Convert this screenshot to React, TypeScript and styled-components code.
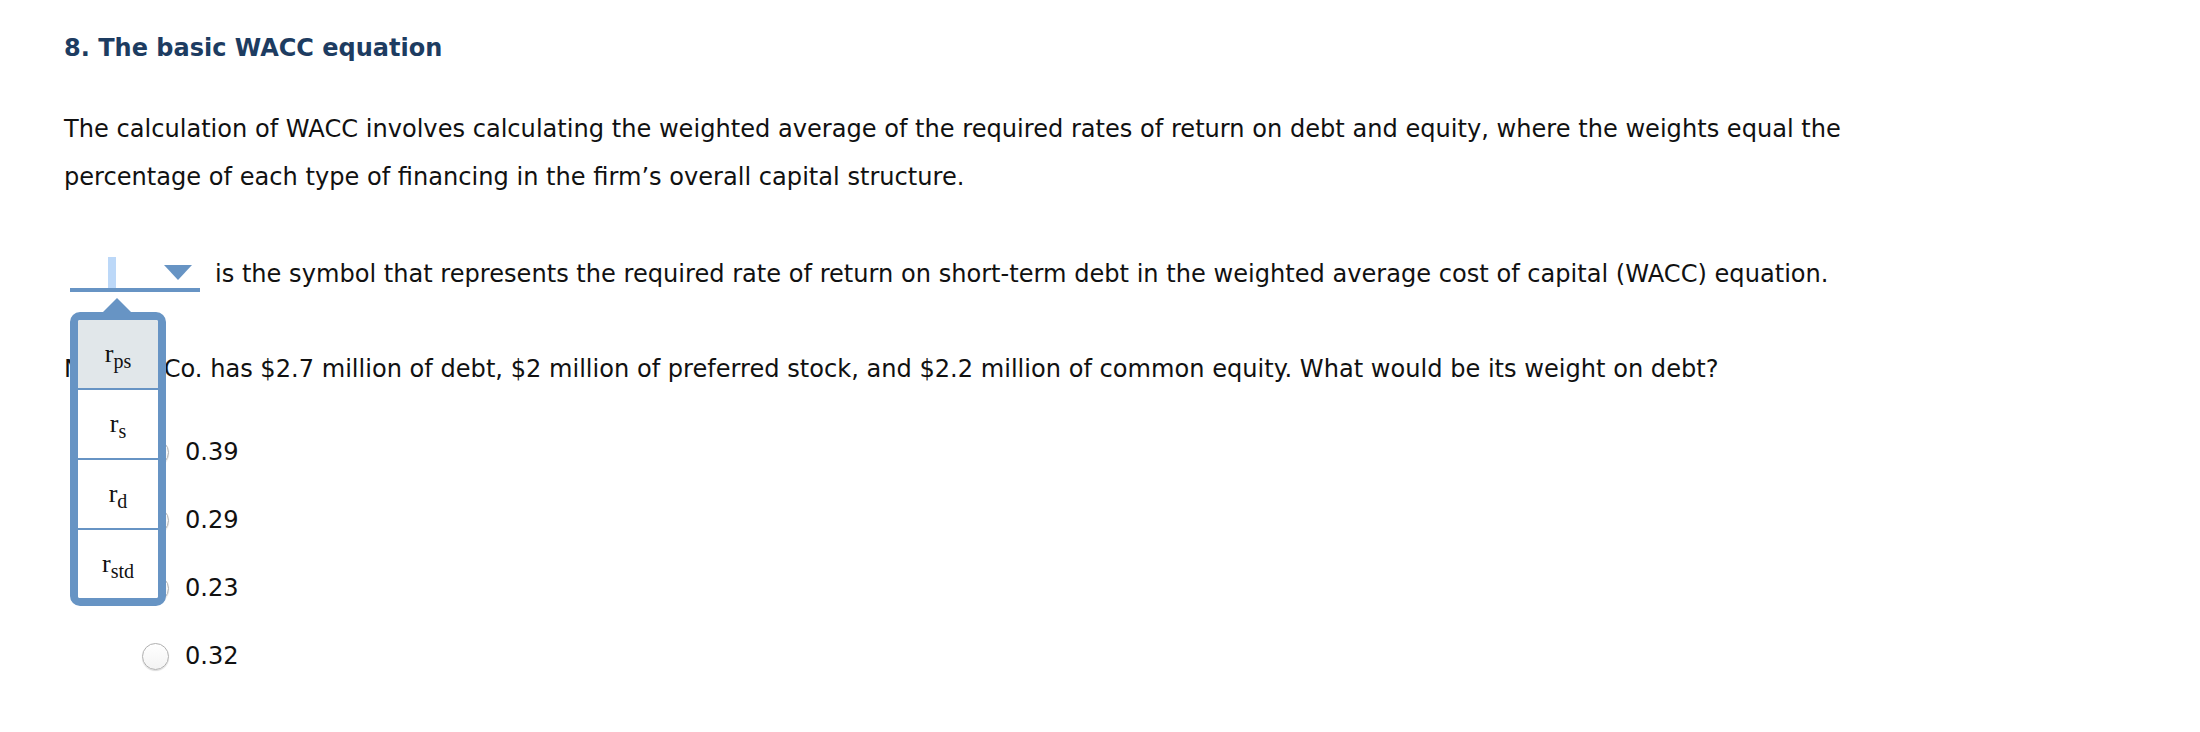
import React, { useState } from 'react';
import styled, { createGlobalStyle } from 'styled-components';

const colors = {
    heading: '#1d3c61',
    text: '#111',
    blue: '#6794c4',
    cursor: '#bcd8f8',
    selected: '#e1e7ea',
};

const GlobalStyle = createGlobalStyle`
    html, body {
        margin: 0;
        padding: 0;
        background: #fff;
    }
    body {
        font-family: "DejaVu Sans", Verdana, sans-serif;
        color: ${colors.text};
    }
`;

const symbols: Array<SymbolOption> = [
    { base: 'r', sub: 'ps' },
    { base: 'r', sub: 's' },
    { base: 'r', sub: 'd' },
    { base: 'r', sub: 'std' },
];

const answers = ['0.39', '0.29', '0.23', '0.32'];

export default function App() {
    const [active] = useState<number>(0);

    return <PageEle>
        <GlobalStyle />
        <Heading>8. The basic WACC equation</Heading>
        <Paragraph>
            The calculation of WACC involves calculating the weighted average of the required rates of return on debt and equity, where the weights equal the percentage of each type of financing in the firm’s overall capital structure.
        </Paragraph>

        <SelectRow>
            <DropDown>
                <Cursor />
                <Caret viewBox="0 0 28 15">
                    <polygon points="0,0 28,0 14,15" />
                </Caret>
                <Popup>
                    <PopupArrow />
                    <PopupBox>
                        {symbols.map((opt, index) =>
                            <OptionEle key={index} selected={index === active}>
                                <Base>{opt.base}</Base><Sub>{opt.sub}</Sub>
                            </OptionEle>
                        )}
                    </PopupBox>
                </Popup>
            </DropDown>
            <RowText>is the symbol that represents the required rate of return on short-term debt in the weighted average cost of capital (WACC) equation.</RowText>
        </SelectRow>

        <Question>Newton Co. has $2.7 million of debt, $2 million of preferred stock, and $2.2 million of common equity. What would be its weight on debt?</Question>

        <AnswerList>
            {answers.map(answer =>
                <AnswerRow key={answer}>
                    <Radio />
                    <AnswerLabel>{answer}</AnswerLabel>
                </AnswerRow>
            )}
        </AnswerList>
    </PageEle>
}

const PageEle = styled.div`
    width: 1870px;
    padding: 33px 0 0 64px;
`;

const Heading = styled.h2`
    margin: 0;
    font-size: 24px;
    line-height: 30px;
    font-weight: bold;
    color: ${colors.heading};
`;

const Paragraph = styled.p`
    margin: 42px 0 0;
    font-size: 24.1px;
    line-height: 48px;
`;

const SelectRow = styled.div`
    display: flex;
    align-items: flex-start;
    margin-top: 49px;
`;

const DropDown = styled.div`
    position: relative;
    flex: none;
    display: flex;
    align-items: flex-start;
    width: 92px;
    height: 31px;
    margin: 7px 15px 0 6px;
    padding-left: 38px;
    border-bottom: 4px solid ${colors.blue};
`;

const Cursor = styled.div`
    width: 8px;
    height: 31px;
    background: ${colors.cursor};
`;

const Caret = styled.svg`
    width: 28px;
    height: 15px;
    margin: 8px 8px 0 auto;
    fill: ${colors.blue};
`;

const RowText = styled.span`
    font-size: 24.1px;
    line-height: 48px;
`;

const Popup = styled.div`
    position: absolute;
    top: 41px;
    left: 0;
    width: 96px;
    z-index: 10;
`;

const PopupArrow = styled.div`
    width: 0;
    height: 0;
    margin-left: 33px;
    border-left: 14px solid transparent;
    border-right: 14px solid transparent;
    border-bottom: 14px solid ${colors.blue};
`;

const PopupBox = styled.div`
    border: 8px solid ${colors.blue};
    border-radius: 10px;
    background: #fff;
    overflow: hidden;
`;

const OptionEle = styled.div<{ selected: boolean }>`
    height: 68px;
    box-sizing: border-box;
    padding-top: 21px;
    text-align: center;
    line-height: 25px;
    white-space: nowrap;
    font-family: "Liberation Serif", "Times New Roman", serif;
    color: #111;
    background: ${props => props.selected ? colors.selected : '#fff'};
    & + & {
        border-top: 2px solid ${colors.blue};
        height: 70px;
    }
`;

const Base = styled.span`
    font-size: 26px;
`;

const Sub = styled.span`
    font-size: 20px;
    vertical-align: -6px;
`;

const Question = styled.p`
    margin: 47px 0 0;
    font-size: 24.1px;
    line-height: 48px;
`;

const AnswerList = styled.div`
    display: flex;
    flex-direction: column;
    gap: 20px;
    margin-top: 35px;
    padding-left: 78px;
`;

const AnswerRow = styled.label`
    display: flex;
    align-items: center;
    gap: 16px;
    height: 48px;
`;

const Radio = styled.span`
    width: 27px;
    height: 27px;
    box-sizing: border-box;
    border-radius: 50%;
    border: 1.5px solid #b0b0b0;
    background: linear-gradient(#fff, #f3f3f3);
    box-shadow: 0 1px 1px rgba(0, 0, 0, 0.15);
`;

const AnswerLabel = styled.span`
    font-size: 24.1px;
    line-height: 48px;
`;

interface SymbolOption {
    base: string;
    sub: string;
}
